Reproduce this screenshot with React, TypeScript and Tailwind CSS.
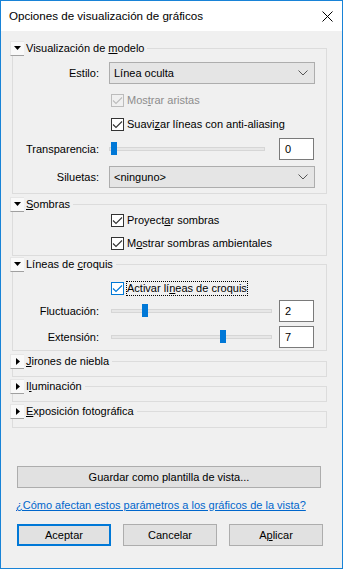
import React from "react";

const font = { fontFamily: '"Liberation Sans", Arial, sans-serif' };

function Toggle({ open }: { open: boolean }) {
  return (
    <span className="flex h-[15px] w-[14px] items-center justify-center border-t border-l border-[#e6e6e6] border-b border-b-[#a0a0a0] bg-[#f9f9f9]">
      {open ? (
        <svg width="7" height="4" viewBox="0 0 7 4">
          <path d="M0 0h7L3.5 4z" fill="#000" />
        </svg>
      ) : (
        <svg width="4" height="7" viewBox="0 0 4 7">
          <path d="M0 0v7l4-3.5z" fill="#000" />
        </svg>
      )}
    </span>
  );
}

function Group({ title, open, children }: { title: React.ReactNode; open: boolean; children?: React.ReactNode }) {
  return (
    <fieldset className="ml-[11px] mr-[15px] border border-[#dcdcdc]">
      <legend className="-ml-[3px] flex h-[16px] items-center pr-[3px]">
        <Toggle open={open} />
        <span className="ml-[2px] leading-[16px]">{title}</span>
      </legend>
      {children}
    </fieldset>
  );
}

function Check({ label, state = "on" }: { label: React.ReactNode; state?: "on" | "off" | "focus" }) {
  const border = state === "off" ? "border-[#bcbcbc] bg-[#f0f0f0]" : state === "focus" ? "border-[#0078d7] bg-white" : "border-[#333] bg-white";
  const stroke = state === "off" ? "#bcbcbc" : state === "focus" ? "#0078d7" : "#333";
  return (
    <div className="flex h-[15px] items-center pl-[98px]">
      <span className={`flex h-[13px] w-[13px] items-center justify-center border ${border}`}>
        <svg width="11" height="11" viewBox="0 0 11 11">
          <path d="M1 5.5l3 3L10 2.5" fill="none" stroke={stroke} strokeWidth="1.1" />
        </svg>
      </span>
      <span
        className={`ml-[2px] h-[15px] px-[1px] leading-[15px] ${state === "off" ? "text-[#8d8d8d]" : "text-black"} ${
          state === "focus" ? "outline outline-1 outline-dotted outline-black -outline-offset-1" : ""
        }`}
      >
        {label}
      </span>
    </div>
  );
}

function Select({ value }: { value: string }) {
  return (
    <div className="flex h-[22px] w-[206px] items-center justify-between border border-[#adadad] bg-[#e5e5e5] pl-[4px] pr-[6px]">
      <span>{value}</span>
      <svg width="10" height="6" viewBox="0 0 10 6">
        <path d="M0.5 0.5L5 5L9.5 0.5" fill="none" stroke="#555" strokeWidth="1" />
      </svg>
    </div>
  );
}

function Slider({ value, width, left, inset = 0 }: { value: number; width: number; left: number; inset?: number }) {
  return (
    <div className="relative flex h-[22px] items-center" style={{ width, marginLeft: left }}>
      <div className="h-[4px] w-full border border-[#d6d6d6] bg-[#e7e7e7]" />
      <div
        className="absolute top-[4px] h-[13px] w-[6px] bg-[#0078d7]"
        style={{ left: inset + (value / 10) * (width - 6 - inset * 2) }}
      />
    </div>
  );
}

function Num({ value }: { value: string }) {
  return (
    <div className="flex h-[22px] w-[35px] items-center border border-[#7a7a7a] bg-white pl-[5px]">{value}</div>
  );
}

function Btn({ children, w, primary }: { children: React.ReactNode; w: string; primary?: boolean }) {
  return (
    <button
      className={`flex h-[22px] ${w} items-center justify-center bg-[#e1e1e1] ${
        primary ? "border-2 border-[#0078d7]" : "border border-[#adadad]"
      }`}
    >
      {children}
    </button>
  );
}

export default function App() {
  return (
    <div style={font} className="flex h-[569px] w-[343px] flex-col border border-[#1883d7] bg-[#f0f0f0] text-[11px] text-black">
      <div className="flex h-[30px] shrink-0 items-center justify-between bg-white pl-[8px] pr-[9px]">
        <span className="text-[11.6px]">Opciones de visualización de gráficos</span>
        <svg width="11" height="11" viewBox="0 0 11 11">
          <path d="M0.5 0.5l10 10M10.5 0.5l-10 10" stroke="#000" strokeWidth="1" />
        </svg>
      </div>

      <div className="mt-[9px]">
        <Group title={<>Visualización de <u>m</u>odelo</>} open>
          <div className="pt-[6px] pb-[5px]">
            <div className="flex items-center">
              <span className="w-[86px] text-right">Estilo:</span>
              <span className="ml-[10px]"><Select value="Línea oculta" /></span>
            </div>
            <div className="mt-[9px]">
              <Check state="off" label={<>Mos<u>t</u>rar aristas</>} />
            </div>
            <div className="mt-[9px]">
              <Check label={<>Suavi<u>z</u>ar líneas con anti-aliasing</>} />
            </div>
            <div className="mt-[6px] flex items-center">
              <span className="w-[86px] text-right">Transparencia:</span>
              <Slider value={0} width={156} left={10} inset={2} />
              <span className="ml-[14px]"><Num value="0" /></span>
            </div>
            <div className="mt-[6px] flex items-center">
              <span className="w-[86px] text-right">Siluetas:</span>
              <span className="ml-[10px]"><Select value="<ninguno>" /></span>
            </div>
          </div>
        </Group>
      </div>

      <div className="mt-[2px]">
        <Group title={<><u>S</u>ombras</>} open>
          <div className="pt-[1px] pb-[4px]">
            <Check label={<>Proyect<u>a</u>r sombras</>} />
            <div className="mt-[8px]">
              <Check label={<>M<u>o</u>strar sombras ambientales</>} />
            </div>
          </div>
        </Group>
      </div>

      <div>
        <Group title={<>Líneas de <u>c</u>roquis</>} open>
          <div className="pt-[9px] pb-[2px]">
            <Check state="focus" label={<>Activar lí<u>n</u>eas de croquis</>} />
            <div className="mt-[4px] flex items-center">
              <span className="w-[86px] text-right">Fluctuación:</span>
              <Slider value={2} width={161} left={12} />
              <span className="ml-[7px]"><Num value="2" /></span>
            </div>
            <div className="mt-[4px] flex items-center">
              <span className="w-[86px] text-right">Extensión:</span>
              <Slider value={7} width={161} left={12} />
              <span className="ml-[7px]"><Num value="7" /></span>
            </div>
          </div>
        </Group>
      </div>

      <div className="mt-[2px]">
        <Group title={<><u>J</u>irones de niebla</>} open={false}>
          <div className="h-[7px]" />
        </Group>
      </div>
      <div className="mt-[1px]">
        <Group title={<>I<u>l</u>uminación</>} open={false}>
          <div className="h-[7px]" />
        </Group>
      </div>
      <div className="mt-[1px]">
        <Group title={<><u>E</u>xposición fotográfica</>} open={false}>
          <div className="h-[8px]" />
        </Group>
      </div>

      <div className="mt-[38px] pl-[16px]">
        <Btn w="w-[304px]">Guardar como plantilla de vista...</Btn>
      </div>
      <a className="mt-[10px] ml-[15px] leading-[14px] text-[#0066cc] underline">
        ¿Cómo afectan estos parámetros a los gráficos de la vista?
      </a>
      <div className="mt-[12px] flex gap-[12px] pl-[16px]">
        <Btn w="w-[94px]" primary>Aceptar</Btn>
        <Btn w="w-[94px]">Cancelar</Btn>
        <Btn w="w-[94px]">A<u>p</u>licar</Btn>
      </div>
    </div>
  );
}
